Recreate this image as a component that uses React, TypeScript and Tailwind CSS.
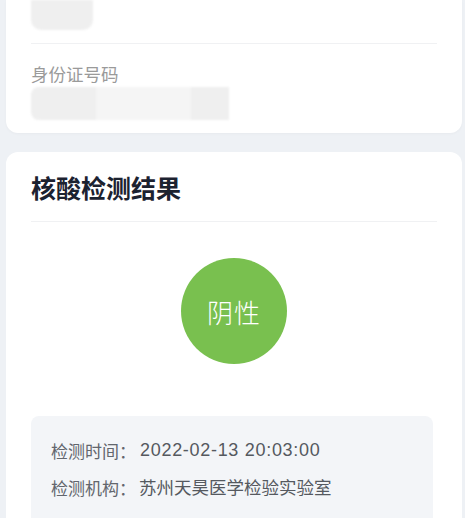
import React from 'react';

const font = { fontFamily: '"Noto Sans CJK SC", "Noto Sans", sans-serif' };

const InfoRow: React.FC<{ label: string; value: string; latin?: boolean }> = ({ label, value, latin }) => (
  <div className="flex h-[37px] items-center text-[17px] text-[#62666d]">
    <span>{label}：</span>
    {latin ? (
      <span className="ml-[4px] text-[18px] text-[#55595f] font-['Liberation_Sans',sans-serif] tracking-[0.7px]">{value}</span>
    ) : (
      <span className="ml-[3px] text-[17.5px] text-[#55595f]">{value}</span>
    )}
  </div>
);

export default function App() {
  return (
    <div style={font} className="w-[465px] h-[518px] overflow-hidden bg-[#eef1f5] pl-[6px] pr-[3px]">
      {/* personal info card, top is scrolled off */}
      <div className="bg-white rounded-b-xl px-[25px] pb-[13px] shadow-[0_1px_3px_rgba(0,0,0,0.03)]">
        <div className="w-[62px] h-[30px] rounded-b-[10px] bg-[#efefef] blur-[1px]" />
        <div className="mt-[13px] h-px bg-[#f0f1f3]" />
        <div className="mt-[18px] text-[17.5px] leading-[24px] text-[#9a9a9a]">身份证号码</div>
        <div className="mt-[1px] flex h-[33px] w-[198px] blur-[1px]">
          <div className="w-[65px] rounded-l-[8px] bg-[#efefef]" />
          <div className="w-[95px] bg-[#f5f5f5]" />
          <div className="w-[38px] bg-[#efefef]" />
        </div>
      </div>

      {/* result card */}
      <div className="mt-[19px] bg-white rounded-t-xl px-[25px] h-[400px]">
        <h2 className="pt-[18px] text-[25px] leading-[34px] font-bold text-[#1c2230]">核酸检测结果</h2>
        <div className="mt-[17px] h-px bg-[#f0f1f3]" />
        <div className="mt-[36px] flex justify-center">
          <div className="w-[106px] h-[106px] rounded-full bg-[#79c04f] flex items-center justify-center">
            <span className="text-white text-[26px] font-light tracking-[1px]">阴性</span>
          </div>
        </div>
        <div className="mt-[52px] mr-[4px] rounded-lg bg-[#f3f5f8] px-[20px] pt-[16px] pb-[20px]">
          <InfoRow label="检测时间" value="2022-02-13 20:03:00" latin />
          <InfoRow label="检测机构" value="苏州天昊医学检验实验室" />
        </div>
      </div>
    </div>
  );
}
